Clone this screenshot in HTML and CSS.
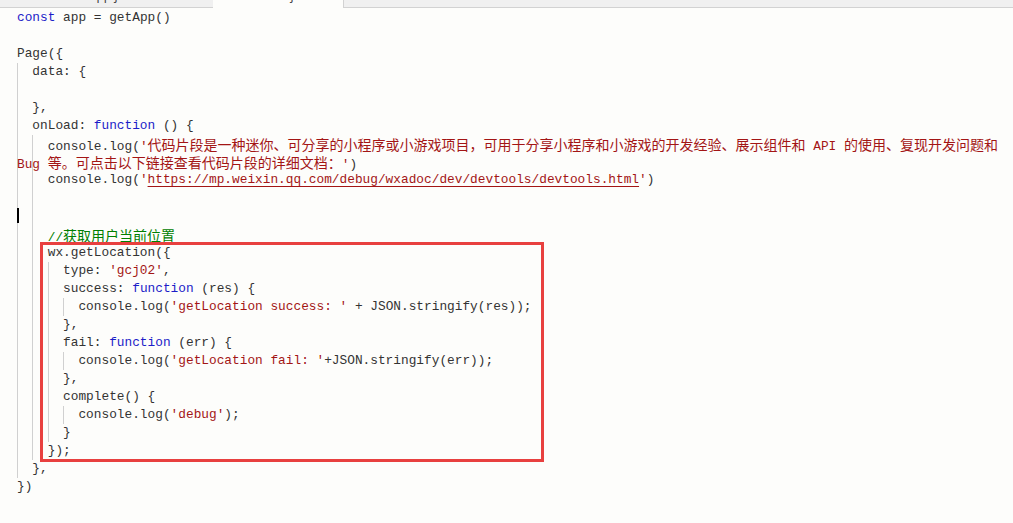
FILE: index.html
```html
<!DOCTYPE html>
<html lang="zh-CN">
<head>
    <meta charset="UTF-8">
    <title>index.js</title>
    <link rel="stylesheet" href="styles.css">
</head>
<body>
    <div class="tabs">
        <div class="tab"><span>app.js</span></div>
        <div class="tab active"><span>index.js</span></div>
        <div class="tab rest"></div>
    </div>
    <div class="editor">
        <div class="line"><span class="kw">const</span> app = getApp()</div>
        <div class="line"></div>
        <div class="line">Page({</div>
        <div class="block">
            <div class="line">data: {</div>
            <div class="line"></div>
            <div class="line">},</div>
            <div class="line">onLoad: <span class="kw">function</span> () {</div>
            <div class="block">
                <div class="line">console.log(<span class="str">'<span class="cjk">代码片段是一种迷你、可分享的小程序或小游戏项目，可用于分享小程序和小游戏的开发经验、展示组件和</span> API <span class="cjk">的使用、复现开发问题和</span></span></div>
                <div class="line wrap"><span class="str">Bug <span class="cjk">等。可点击以下链接查看代码片段的详细文档：</span>'</span>)</div>
                <div class="line">console.log(<span class="str">'<span class="url">https://mp.weixin.qq.com/debug/wxadoc/dev/devtools/devtools.html</span>'</span>)</div>
                <div class="line"></div>
                <div class="line wrap"><span class="cursor"></span></div>
                <div class="line"><span class="cm">//<span class="cjk">获取用户当前位置</span></span></div>
                <div class="marked">
                    <div class="line">wx.getLocation({</div>
                    <div class="block">
                        <div class="line">type: <span class="str">'gcj02'</span>,</div>
                        <div class="line">success: <span class="kw">function</span> (res) {</div>
                        <div class="block">
                            <div class="line">console.log(<span class="str">'getLocation success: '</span> + JSON.stringify(res));</div>
                        </div>
                        <div class="line">},</div>
                        <div class="line">fail: <span class="kw">function</span> (err) {</div>
                        <div class="block">
                            <div class="line">console.log(<span class="str">'getLocation fail: '</span>+JSON.stringify(err));</div>
                        </div>
                        <div class="line">},</div>
                        <div class="line">complete() {</div>
                        <div class="block">
                            <div class="line">console.log(<span class="str">'debug'</span>);</div>
                        </div>
                        <div class="line">}</div>
                    </div>
                    <div class="line">});</div>
                </div>
            </div>
            <div class="line">},</div>
        </div>
        <div class="line">})</div>
    </div>
</body>
</html>
```

FILE: styles.css
```css
body {
    margin: 0;
    background: #fdfdfb;
    color: #333;
    font-family: "Liberation Mono", "Noto Sans CJK SC", monospace;
    font-size: 12.8px;
}

/* tab strip, mostly scrolled out of view */
.tabs {
    display: flex;
    height: 8px;
    overflow: hidden;
}

.tab {
    width: 213px;
    background: #f0f0f0;
    border-bottom: 1px solid #d2d2d2;
    text-align: center;
    overflow: hidden;
    box-sizing: border-box;
}

.tab span {
    display: block;
    margin-top: -11px;
    font-family: "Noto Sans", sans-serif;
    font-size: 12px;
    line-height: 14px;
    color: #444;
}

.tab.active {
    width: 130px;
    background: #fdfdfb;
    border-bottom: none;
}

.tab.rest {
    flex: 1;
    border-left: 1px solid #d2d2d2;
}

.editor {
    padding-top: 1px;
    padding-left: 17px;
}

.line {
    height: 18px;
    line-height: 18px;
    white-space: pre;
}

.block {
    border-left: 1px solid #d0d0d0;
    padding-left: 14.36px;
}

.wrap {
    margin-left: -30.72px;
}

.kw {
    color: #1c1cc8;
}

.str {
    color: #a31515;
}

.cm {
    color: #008000;
}

.cjk {
    font-family: "Noto Sans CJK SC", sans-serif;
    font-size: 14px;
    line-height: 18px;
}

.url {
    text-decoration: underline;
    text-decoration-color: #a31515;
    text-underline-offset: 3px;
}

.cursor {
    display: block;
    width: 2px;
    height: 15px;
    margin-top: 1px;
    background: #000;
}

.marked {
    box-sizing: border-box;
    width: 500px;
    margin-left: -6px;
    padding-left: 6px;
    outline: 3px solid #e8403f;
    outline-offset: -1px;
}
```
